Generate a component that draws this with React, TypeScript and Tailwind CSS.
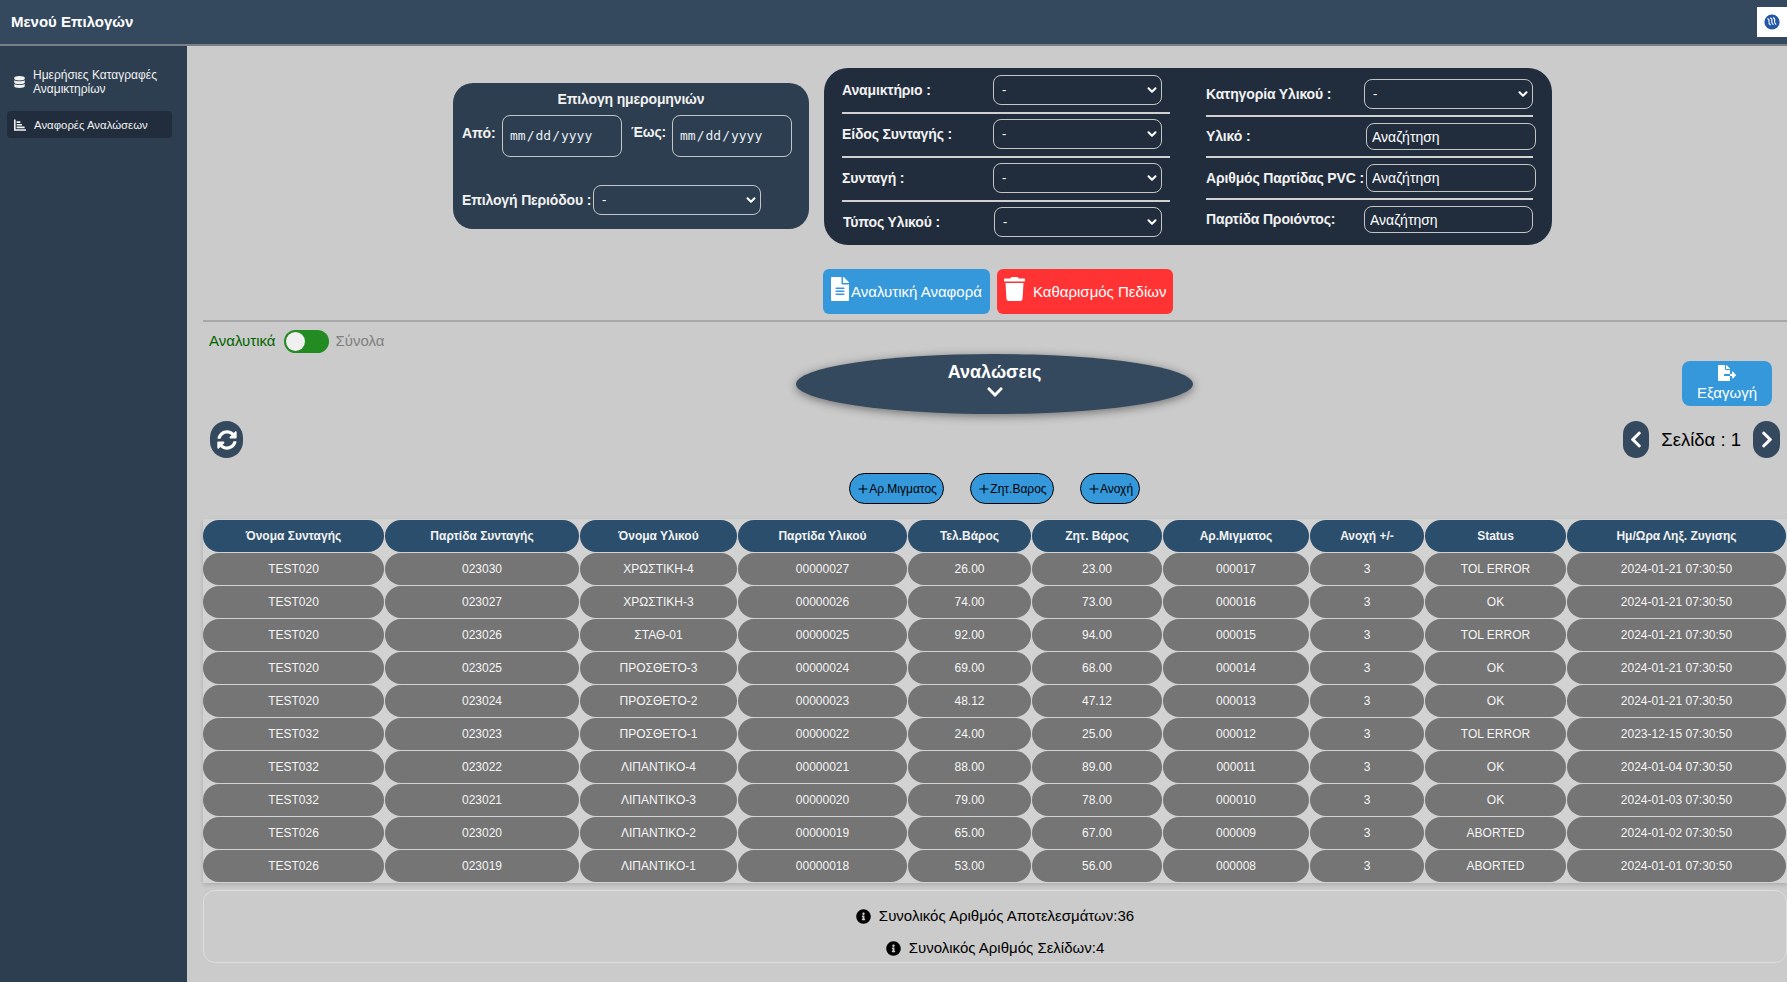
import { ChevronDown, Plus } from "lucide-react";
import {
  FaChevronDown,
  FaChevronLeft,
  FaChevronRight,
  FaDatabase,
  FaFileAlt,
  FaFileExport,
  FaInfoCircle,
  FaSyncAlt,
  FaTrash,
} from "react-icons/fa";

const columns = [
  { title: "Όνομα Συνταγής", width: "w-[181px]" },
  { title: "Παρτίδα Συνταγής", width: "w-[194px]" },
  { title: "Όνομα Υλικού", width: "w-[157px]" },
  { title: "Παρτίδα Υλικού", width: "w-[169px]" },
  { title: "Τελ.Βάρος", width: "w-[123px]" },
  { title: "Ζητ. Βάρος", width: "w-[130px]" },
  { title: "Αρ.Μιγματος", width: "w-[146px]" },
  { title: "Ανοχή +/-", width: "w-[114px]" },
  { title: "Status", width: "w-[141px]" },
  { title: "Ημ/Ωρα Ληξ. Ζυγισης", width: "w-[219px]" },
];

const rows = [
  ["TEST020", "023030", "ΧΡΩΣΤΙΚΗ-4", "00000027", "26.00", "23.00", "000017", "3", "TOL ERROR", "2024-01-21 07:30:50"],
  ["TEST020", "023027", "ΧΡΩΣΤΙΚΗ-3", "00000026", "74.00", "73.00", "000016", "3", "OK", "2024-01-21 07:30:50"],
  ["TEST020", "023026", "ΣΤΑΘ-01", "00000025", "92.00", "94.00", "000015", "3", "TOL ERROR", "2024-01-21 07:30:50"],
  ["TEST020", "023025", "ΠΡΟΣΘΕΤΟ-3", "00000024", "69.00", "68.00", "000014", "3", "OK", "2024-01-21 07:30:50"],
  ["TEST020", "023024", "ΠΡΟΣΘΕΤΟ-2", "00000023", "48.12", "47.12", "000013", "3", "OK", "2024-01-21 07:30:50"],
  ["TEST032", "023023", "ΠΡΟΣΘΕΤΟ-1", "00000022", "24.00", "25.00", "000012", "3", "TOL ERROR", "2023-12-15 07:30:50"],
  ["TEST032", "023022", "ΛΙΠΑΝΤΙΚΟ-4", "00000021", "88.00", "89.00", "000011", "3", "OK", "2024-01-04 07:30:50"],
  ["TEST032", "023021", "ΛΙΠΑΝΤΙΚΟ-3", "00000020", "79.00", "78.00", "000010", "3", "OK", "2024-01-03 07:30:50"],
  ["TEST026", "023020", "ΛΙΠΑΝΤΙΚΟ-2", "00000019", "65.00", "67.00", "000009", "3", "ABORTED", "2024-01-02 07:30:50"],
  ["TEST026", "023019", "ΛΙΠΑΝΤΙΚΟ-1", "00000018", "53.00", "56.00", "000008", "3", "ABORTED", "2024-01-01 07:30:50"],
];

function SelectBox({ className }: { className: string }) {
  return (
    <div className={`relative ${className}`}>
      <select className="w-full h-full appearance-none bg-transparent border border-[#c4c4c4] rounded-lg pl-2 text-white text-[13px] outline-none">
        <option>-</option>
      </select>
      <ChevronDown className="absolute right-[3px] top-1/2 -translate-y-1/2 w-[14px] h-[14px] text-white pointer-events-none" strokeWidth={3.5} />
    </div>
  );
}

function SearchBox({ className }: { className: string }) {
  return (
    <input
      placeholder="Αναζήτηση"
      className={`bg-transparent border border-[#c4c4c4] rounded-lg px-[5px] text-[14px] text-white placeholder:text-white outline-none ${className}`}
    />
  );
}

function DateBox() {
  return (
    <input
      type="date"
      className="w-[120px] h-[42px] shrink-0 bg-transparent border border-[#c4c4c4] rounded-lg pl-[6px] text-[13px] text-[#e8eef5] outline-none [font-family:'DejaVu_Sans_Mono',monospace] [&::-webkit-calendar-picker-indicator]:hidden"
    />
  );
}

function FormRow({ label, className, children }: { label: string; className: string; children: React.ReactNode }) {
  return (
    <div className={`flex items-center justify-between ${className}`}>
      <span className="font-bold text-[14px] tracking-[-0.15px] text-[#f2f2f2] whitespace-nowrap">{label}</span>
      {children}
    </div>
  );
}

function Rule() {
  return <div className="h-[2px] bg-[#d0d0d0]" />;
}

function AddButton({ label, width }: { label: string; width: string }) {
  return (
    <button className={`flex items-center justify-center h-[31px] ${width} rounded-full border border-black bg-[#3498db] text-[12px] text-black`}>
      <Plus className="w-[14px] h-[14px] -mr-px" strokeWidth={1.8} />
      {label}
    </button>
  );
}

export default function App() {
  return (
    <div className="w-full h-[982px] overflow-hidden flex flex-col bg-[#cbcbcb] [font-family:'Liberation_Sans',Arial,sans-serif]">
      {/* Top bar */}
      <header className="h-[46px] shrink-0 flex items-center justify-between bg-[#34495e] border-b-2 border-[#7a7f85] pl-[11px]">
        <span className="text-white font-bold text-[15px]">Μενού Επιλογών</span>
        <div className="w-[30px] h-[30px] bg-white flex items-center justify-center">
          <svg width="16" height="16" viewBox="0 0 16 16">
            <circle cx="8" cy="8" r="7.6" fill="#2356a5" />
            <path d="M3.4 4.6c1.8.9 1.9 2 1.6 3s.1 2.2 1.6 3.4M6.2 3.8c1.8.9 1.9 2.2 1.6 3.2s.1 2.4 1.6 3.8M9 3.6c1.8.9 1.9 2.4 1.6 3.4s.1 2.4 1.6 3.6" fill="none" stroke="#fff" strokeWidth="1.1" />
          </svg>
        </div>
      </header>

      <div className="flex flex-1 min-h-0">
        {/* Sidebar */}
        <aside className="w-[187px] shrink-0 bg-[#2c3e50] text-[#f2f2f2] text-[12px] leading-[14px] pl-[7px] pr-[15px] pt-[22px]">
          <a className="flex items-center gap-[8px] pl-[7px] h-[28px]">
            <FaDatabase className="w-[11px] h-[12px] shrink-0" />
            <span className="whitespace-nowrap">Ημερήσιες Καταγραφές<br />Αναμικτηρίων</span>
          </a>
          <a className="flex items-center gap-[8px] pl-[7px] h-[27px] mt-[15px] rounded bg-[#212d3d]">
            <svg className="w-[12px] h-[12px] shrink-0" viewBox="0 0 12 12" fill="currentColor">
              <path d="M0 0.5h1.6V10.2H12V11.8H0z" />
              <path d="M2.6 2.2H6.4V4H2.6zM2.6 5H8V6.6H2.6zM2.6 7.6H10.6V9.2H2.6z" />
            </svg>
            <span className="text-[11.4px] whitespace-nowrap">Αναφορές Αναλώσεων</span>
          </a>
        </aside>

        {/* Main */}
        <main className="flex-1 min-w-0 pl-[16px]">
          {/* Filters */}
          <div className="flex items-start gap-[15px] pl-[250px] pt-[22px]">
            <section className="w-[356px] h-[146px] mt-[15px] rounded-[20px] bg-[#2c3e50] px-[9px] pt-[7px] text-[#f2f2f2]">
              <h3 className="font-bold text-[14px] tracking-[-0.15px] text-center h-[18px] leading-[18px]">Επιλογη ημερομηνιών</h3>
              <div className="flex items-start mt-[7px]">
                <span className="font-bold text-[14px] tracking-[-0.15px] w-[40px] mt-[8px]">Από:</span>
                <DateBox />
                <span className="font-bold text-[14px] tracking-[-0.15px] ml-[9px] w-[41px] mt-[7px]">Έως:</span>
                <DateBox />
              </div>
              <div className="flex items-center mt-[28px]">
                <span className="font-bold text-[14px] tracking-[-0.15px] w-[131px] whitespace-nowrap">Επιλογή Περιόδου :</span>
                <SelectBox className="w-[168px] h-[30px]" />
              </div>
            </section>

            <section className="w-[728px] h-[177px] rounded-[24px] bg-[#212d3d] flex pl-[18px] pt-[7px]">
              <div className="w-[328px] flex flex-col">
                <FormRow label="Αναμικτήριο :" className="h-[30px] pr-[8px]">
                  <SelectBox className="w-[169px] h-[30px]" />
                </FormRow>
                <div className="mt-[7px]"><Rule /></div>
                <FormRow label="Είδος Συνταγής :" className="h-[30px] pr-[8px] mt-[5px]">
                  <SelectBox className="w-[169px] h-[30px]" />
                </FormRow>
                <div className="mt-[7px]"><Rule /></div>
                <FormRow label="Συνταγή :" className="h-[30px] pr-[8px] mt-[5px]">
                  <SelectBox className="w-[169px] h-[30px]" />
                </FormRow>
                <div className="mt-[7px]"><Rule /></div>
                <FormRow label="Τύπος Υλικού :" className="h-[30px] pr-[8px] mt-[5px] pl-[1px]">
                  <SelectBox className="w-[168px] h-[30px]" />
                </FormRow>
              </div>
              <div className="w-[330px] ml-[36px] flex flex-col pt-[4px]">
                <FormRow label="Κατηγορία Υλικού :" className="h-[30px] pr-[3px]">
                  <SelectBox className="w-[169px] h-[30px]" />
                </FormRow>
                <div className="mt-[6px] mr-[3px]"><Rule /></div>
                <FormRow label="Υλικό :" className="h-[27px] mt-[6px]">
                  <SearchBox className="w-[170px] h-[27px]" />
                </FormRow>
                <div className="mt-[6px] mr-[3px]"><Rule /></div>
                <FormRow label="Αριθμός Παρτίδας PVC :" className="h-[28px] mt-[6px]">
                  <SearchBox className="w-[170px] h-[28px]" />
                </FormRow>
                <div className="mt-[6px] mr-[3px]"><Rule /></div>
                <FormRow label="Παρτίδα Προιόντος:" className="h-[27px] mt-[6px] pr-[3px]">
                  <SearchBox className="w-[169px] h-[27px]" />
                </FormRow>
              </div>
            </section>
          </div>

          {/* Actions */}
          <div className="flex gap-[7px] pl-[620px] mt-[24px]">
            <button className="w-[167px] h-[45px] rounded-md bg-[#3498db] text-white text-[15px] flex items-center pl-[8px] pt-[2px] gap-[2px] whitespace-nowrap">
              <FaFileAlt className="w-[18px] h-[24px] shrink-0 -mt-[7px]" />
              Αναλυτική Αναφορά
            </button>
            <button className="w-[176px] h-[45px] rounded-md bg-[#ff3333] text-white text-[15px] flex items-center pl-[7px] pt-[2px] gap-[8px] whitespace-nowrap">
              <FaTrash className="w-[21px] h-[24px] shrink-0 -mt-[7px]" />
              Καθαρισμός Πεδίων
            </button>
          </div>

          <div className="h-[2px] bg-[#a8a8a8] mt-[6px]" />

          {/* Toggle */}
          <div className="flex items-center h-[23px] mt-[8px] pl-[6px] text-[15px]">
            <span className="text-[#006400]">Αναλυτικά</span>
            <div className="w-[45px] h-[23px] ml-[8px] rounded-full bg-[#228b22] flex items-center pl-[2px]">
              <div className="w-[19px] h-[19px] rounded-full bg-[#f0f0f0]" />
            </div>
            <span className="text-[#808080] ml-[7px]">Σύνολα</span>
          </div>

          {/* Title row */}
          <div className="grid grid-cols-[1fr_397px_1fr] mt-px mr-px">
            <div />
            <button className="h-[60px] rounded-[50%] bg-[#34495e] text-white shadow-[0_2px_10px_rgba(0,0,0,0.45)] flex flex-col items-center pt-[8px]">
              <span className="font-bold text-[18px] leading-[20px]">Αναλώσεις</span>
              <FaChevronDown className="w-[18px] h-[18px] mt-[1px]" />
            </button>
            <div className="flex justify-end pr-[14px] pt-[7px]">
              <button className="w-[90px] h-[45px] rounded-lg bg-[#3498db] text-white text-[15px] leading-[18px] flex flex-col items-center justify-center">
                <FaFileExport className="w-[18px] h-[16px] mb-[3px]" />
                Εξαγωγή
              </button>
            </div>
          </div>

          {/* Refresh and pagination */}
          <div className="flex items-center justify-between h-[37px] mt-[7px] pl-[7px] pr-[7px]">
            <button className="w-[33px] h-[37px] rounded-full bg-[#34495e] text-white flex items-center justify-center">
              <FaSyncAlt className="w-[20px] h-[20px]" />
            </button>
            <div className="flex items-center text-[18.5px] text-black">
              <button className="w-[26px] h-[37px] rounded-full bg-[#34495e] text-white flex items-center justify-center">
                <FaChevronLeft className="w-[18px] h-[19px]" />
              </button>
              <span className="mx-[12px] whitespace-nowrap">Σελίδα : 1</span>
              <button className="w-[27px] h-[37px] rounded-full bg-[#34495e] text-white flex items-center justify-center">
                <FaChevronRight className="w-[18px] h-[19px]" />
              </button>
            </div>
          </div>

          {/* Extra columns */}
          <div className="flex justify-center gap-[26px] mt-[15px] mr-px">
            <AddButton label="Αρ.Μιγματος" width="w-[95px]" />
            <AddButton label="Ζητ.Βαρος" width="w-[84px]" />
            <AddButton label="Ανοχή" width="w-[60px]" />
          </div>

          {/* Table */}
          <div className="mt-[15px] mb-[1px] bg-[#d2d2d2] shadow-[0_2px_4px_rgba(0,0,0,0.15)]">
            <table className="w-[1585px] -ml-px table-fixed border-separate border-spacing-[1px] text-[12px] text-center">
              <thead>
                <tr>
                  {columns.map((col) => (
                    <th key={col.title} className={`${col.width} h-[32px] p-0 rounded-full bg-[#2b4e6c] text-[#f2f2f2] font-bold`}>
                      {col.title}
                    </th>
                  ))}
                </tr>
              </thead>
              <tbody>
                {rows.map((row) => (
                  <tr key={row[6]}>
                    {row.map((cell, i) => (
                      <td key={i} className="h-[32px] p-0 rounded-full bg-[#757575] text-[#f5f5f5]">
                        {cell}
                      </td>
                    ))}
                  </tr>
                ))}
              </tbody>
            </table>
          </div>

          {/* Totals */}
          <div className="h-[73px] mt-[7px] rounded-xl border border-[#dedede] flex flex-col items-center text-[15px] text-black pt-[16px] gap-[14px]">
            <div className="flex items-center gap-[8px] h-[18px]">
              <FaInfoCircle className="w-[15px] h-[15px]" />
              <span>Συνολικός Αριθμός Αποτελεσμάτων:36</span>
            </div>
            <div className="flex items-center gap-[8px] h-[18px]">
              <FaInfoCircle className="w-[15px] h-[15px]" />
              <span>Συνολικός Αριθμός Σελίδων:4</span>
            </div>
          </div>
        </main>
      </div>
    </div>
  );
}
